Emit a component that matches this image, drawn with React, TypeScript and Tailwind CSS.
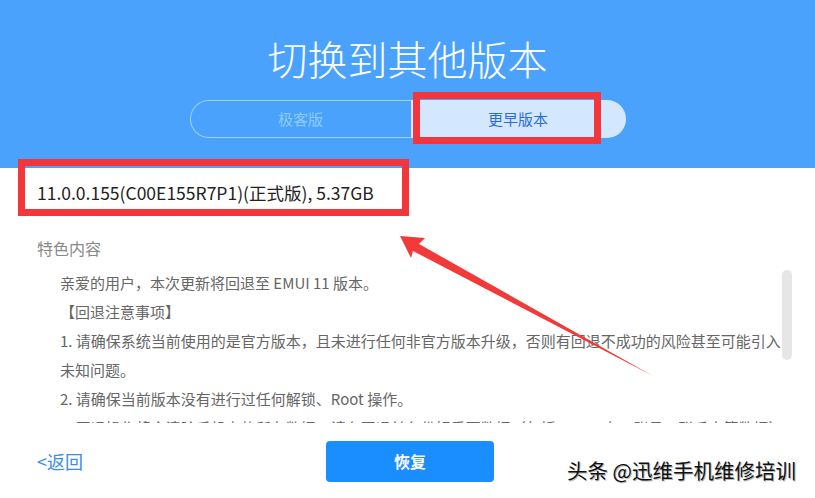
import React from "react";

export default function App() {
  const lines = [
    "亲爱的用户，本次更新将回退至 EMUI 11 版本。",
    "【回退注意事项】",
    "1. 请确保系统当前使用的是官方版本，且未进行任何非官方版本升级，否则有回退不成功的风险甚至可能引入",
    "未知问题。",
    "2. 请确保当前版本没有进行过任何解锁、Root 操作。",
    "3. 回退操作将会清除手机上的所有数据，请在回退前备份好重要数据（包括 Huawei ID 账号、联系人等数据）。",
  ];
  return (
    <div className="relative w-[815px] h-[498px] overflow-hidden bg-white font-['Noto_Sans_CJK_SC','Noto_Sans',sans-serif]">
      <header className="h-[168px] bg-[#4ba2fd] flex flex-col items-center">
        <h1 className="pt-[34px] text-[40px] leading-[48px] font-light text-white">
          切换到其他版本
        </h1>
        <div className="mt-[18px] flex w-[436px] h-[38px]">
          <div className="w-[221px] flex items-center justify-center rounded-l-full border border-r-0 border-white/50 text-[15px] text-[#8ccdf3]">
            极客版
          </div>
          <div className="flex-1 flex items-center justify-center rounded-r-full bg-[#d3e7ff] text-[15px] text-[#2c6fd4]">
            更早版本
          </div>
        </div>
      </header>

      <div className="px-[37px] pt-[12px] text-[17.5px] leading-[26px] text-[#222]">
        11.0.0.155(C00E155R7P1)(正式版), 5.37GB
      </div>

      <div className="mt-[30px] px-[37px] text-[16px] leading-[24px] text-[#888]">特色内容</div>

      <div className="relative mt-[8px] h-[156px] overflow-hidden text-[15px] leading-[29px] text-[#666]">
        <div className="h-[155px] overflow-hidden pl-[60px]">
          {lines.map((l, i) => (
            <div key={i} className="whitespace-nowrap">
              {l}
            </div>
          ))}
        </div>
        <div className="absolute right-[23px] top-[2px] w-[10px] h-[90px] rounded-full bg-[#e6e6e6]" />
      </div>

      <div className="grid grid-cols-[289px_168px_1fr] items-center h-[74px] pl-[37px]">
        <a className="text-[18px] text-[#3b8cf0] cursor-pointer">&lt;返回</a>
        <button className="h-[41px] w-[168px] rounded-[4px] bg-[#1a8dff] text-white text-[16px] font-bold">
          恢复
        </button>
        <div />
      </div>

      <div className="absolute left-[567px] top-[456px] text-[20.5px] leading-[28px] text-[#111] whitespace-nowrap [text-shadow:1px_1px_0_#bbb,-1px_-1px_0_#fff]">
        头条 @迅维手机维修培训
      </div>

      <div className="absolute left-[413px] top-[92px] w-[188px] h-[52px] border-[7px] border-[#f3363b] pointer-events-none" />
      <div className="absolute left-[18px] top-[159px] w-[391px] h-[57px] border-[7px] border-[#f3363b] pointer-events-none" />

      <svg className="absolute left-0 top-0 pointer-events-none" width="815" height="498" viewBox="0 0 815 498">
        <polygon
          points="400,236 425,238 419,244 653,376 413,251 411,258"
          fill="#f23a3a"
        />
      </svg>
    </div>
  );
}
